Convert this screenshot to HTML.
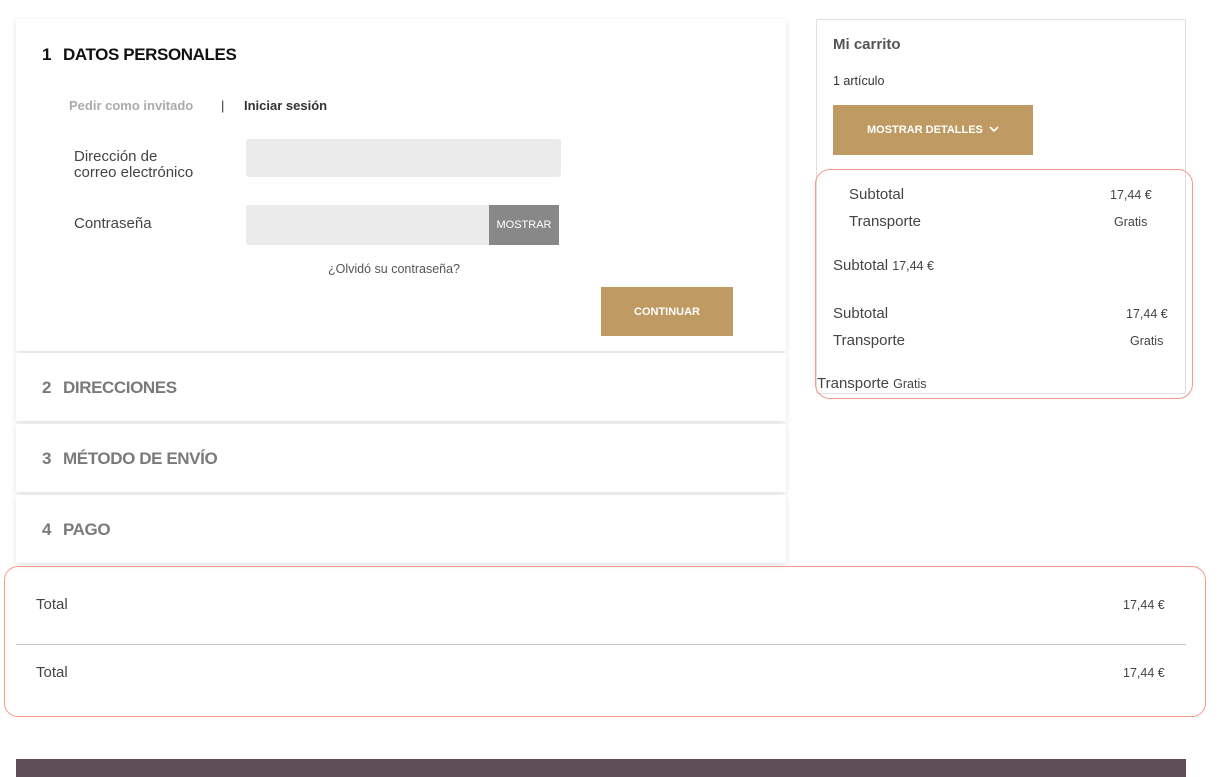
<!DOCTYPE html>
<html><head><meta charset="utf-8"><style>
body{margin:0;width:1227px;height:777px;background:#fff;font-family:"Liberation Sans",sans-serif;position:relative;overflow:hidden;color:#333}
.a{position:absolute}
.card{position:absolute;left:16px;width:770px;background:#fff;box-shadow:0 2px 6px rgba(0,0,0,.12)}
.h{position:absolute;left:26px;font-weight:bold;font-size:17px;color:#7a7a7a;letter-spacing:-.4px}
.h span{display:inline-block;width:21px}
</style></head><body>
<div class="card" style="top:19px;height:332px"></div>
<div class="card" style="top:353px;height:68px"></div>
<div class="card" style="top:424px;height:68px"></div>
<div class="card" style="top:495px;height:68px"></div>
<div class="h" style="left:42px;top:45px;color:#111"><span>1</span>DATOS PERSONALES</div>
<div class="a" style="left:69px;top:98px;font-size:13px;font-weight:bold;color:#aaa">Pedir como invitado</div>
<div class="a" style="left:221px;top:98px;font-size:13px;color:#333">|</div>
<div class="a" style="left:244px;top:98px;font-size:13px;font-weight:bold;color:#333">Iniciar sesión</div>
<div class="a" style="left:74px;top:149px;font-size:15px;line-height:16px;color:#444">Dirección de<br>correo electrónico</div>
<div class="a" style="left:246px;top:139px;width:315px;height:38px;background:#ebebeb;border-radius:3px"></div>
<div class="a" style="left:74px;top:215px;font-size:15px;color:#444">Contraseña</div>
<div class="a" style="left:246px;top:205px;width:243px;height:40px;background:#ebebeb;border-radius:3px 0 0 3px"></div>
<div class="a" style="left:489px;top:205px;width:70px;height:40px;background:#888;color:#fff;font-size:11px;line-height:41px;text-align:center">MOSTRAR</div>
<div class="a" style="left:328px;top:262px;font-size:12.5px;color:#555">¿Olvidó su contraseña?</div>
<div class="a" style="left:601px;top:287px;width:132px;height:49px;background:#bf9a62;color:#fff;font-size:11px;font-weight:bold;line-height:50px;text-align:center">CONTINUAR</div>
<div class="h" style="left:42px;top:378px"><span>2</span>DIRECCIONES</div>
<div class="h" style="left:42px;top:449px"><span>3</span>MÉTODO DE ENVÍO</div>
<div class="h" style="left:42px;top:520px"><span>4</span>PAGO</div>

<div class="a" style="left:816px;top:19px;width:368px;height:373px;border:1px solid #e0e0e0;border-radius:2px"></div>
<div class="a" style="left:833px;top:36px;font-size:15px;font-weight:bold;color:#555">Mi carrito</div>
<div class="a" style="left:833px;top:74px;font-size:12.5px;color:#333">1 artículo</div>
<div class="a" style="left:833px;top:105px;width:200px;height:50px;background:#bf9a62;color:#fff;font-size:11px;font-weight:bold;line-height:50px;text-align:center">MOSTRAR DETALLES &nbsp;<svg width="10" height="7" viewBox="0 0 10 7"><path d="M1 1l4 4 4-4" stroke="#fff" stroke-width="1.6" fill="none"/></svg></div>
<div class="a" style="left:815px;top:169px;width:378px;height:230px;border:1.5px solid #f59a8a;border-radius:15px;box-sizing:border-box"></div>
<div class="a" style="left:849px;top:186px;font-size:15px;color:#444">Subtotal</div>
<div class="a" style="left:1110px;top:188px;font-size:12.5px;color:#444">17,44 €</div>
<div class="a" style="left:849px;top:213px;font-size:15px;color:#444">Transporte</div>
<div class="a" style="left:1114px;top:215px;font-size:12.5px;color:#444">Gratis</div>
<div class="a" style="left:833px;top:257px;font-size:15px;color:#444">Subtotal <span style="font-size:12.5px">17,44 €</span></div>
<div class="a" style="left:833px;top:305px;font-size:15px;color:#444">Subtotal</div>
<div class="a" style="left:1126px;top:307px;font-size:12.5px;color:#444">17,44 €</div>
<div class="a" style="left:833px;top:332px;font-size:15px;color:#444">Transporte</div>
<div class="a" style="left:1130px;top:334px;font-size:12.5px;color:#444">Gratis</div>
<div class="a" style="left:817px;top:375px;font-size:15px;color:#444">Transporte <span style="font-size:12.5px">Gratis</span></div>

<div class="a" style="left:4px;top:566px;width:1202px;height:151px;border:1.5px solid #f59a8a;border-radius:14px;box-sizing:border-box"></div>
<div class="a" style="left:36px;top:596px;font-size:15px;color:#444">Total</div>
<div class="a" style="left:1123px;top:598px;font-size:12.5px;color:#444">17,44 €</div>
<div class="a" style="left:16px;top:644px;width:1170px;height:1px;background:#c8c8c8"></div>
<div class="a" style="left:36px;top:664px;font-size:15px;color:#444">Total</div>
<div class="a" style="left:1123px;top:666px;font-size:12.5px;color:#444">17,44 €</div>
<div class="a" style="left:16px;top:759px;width:1170px;height:18px;background:#5e4f57"></div>
</body></html>
